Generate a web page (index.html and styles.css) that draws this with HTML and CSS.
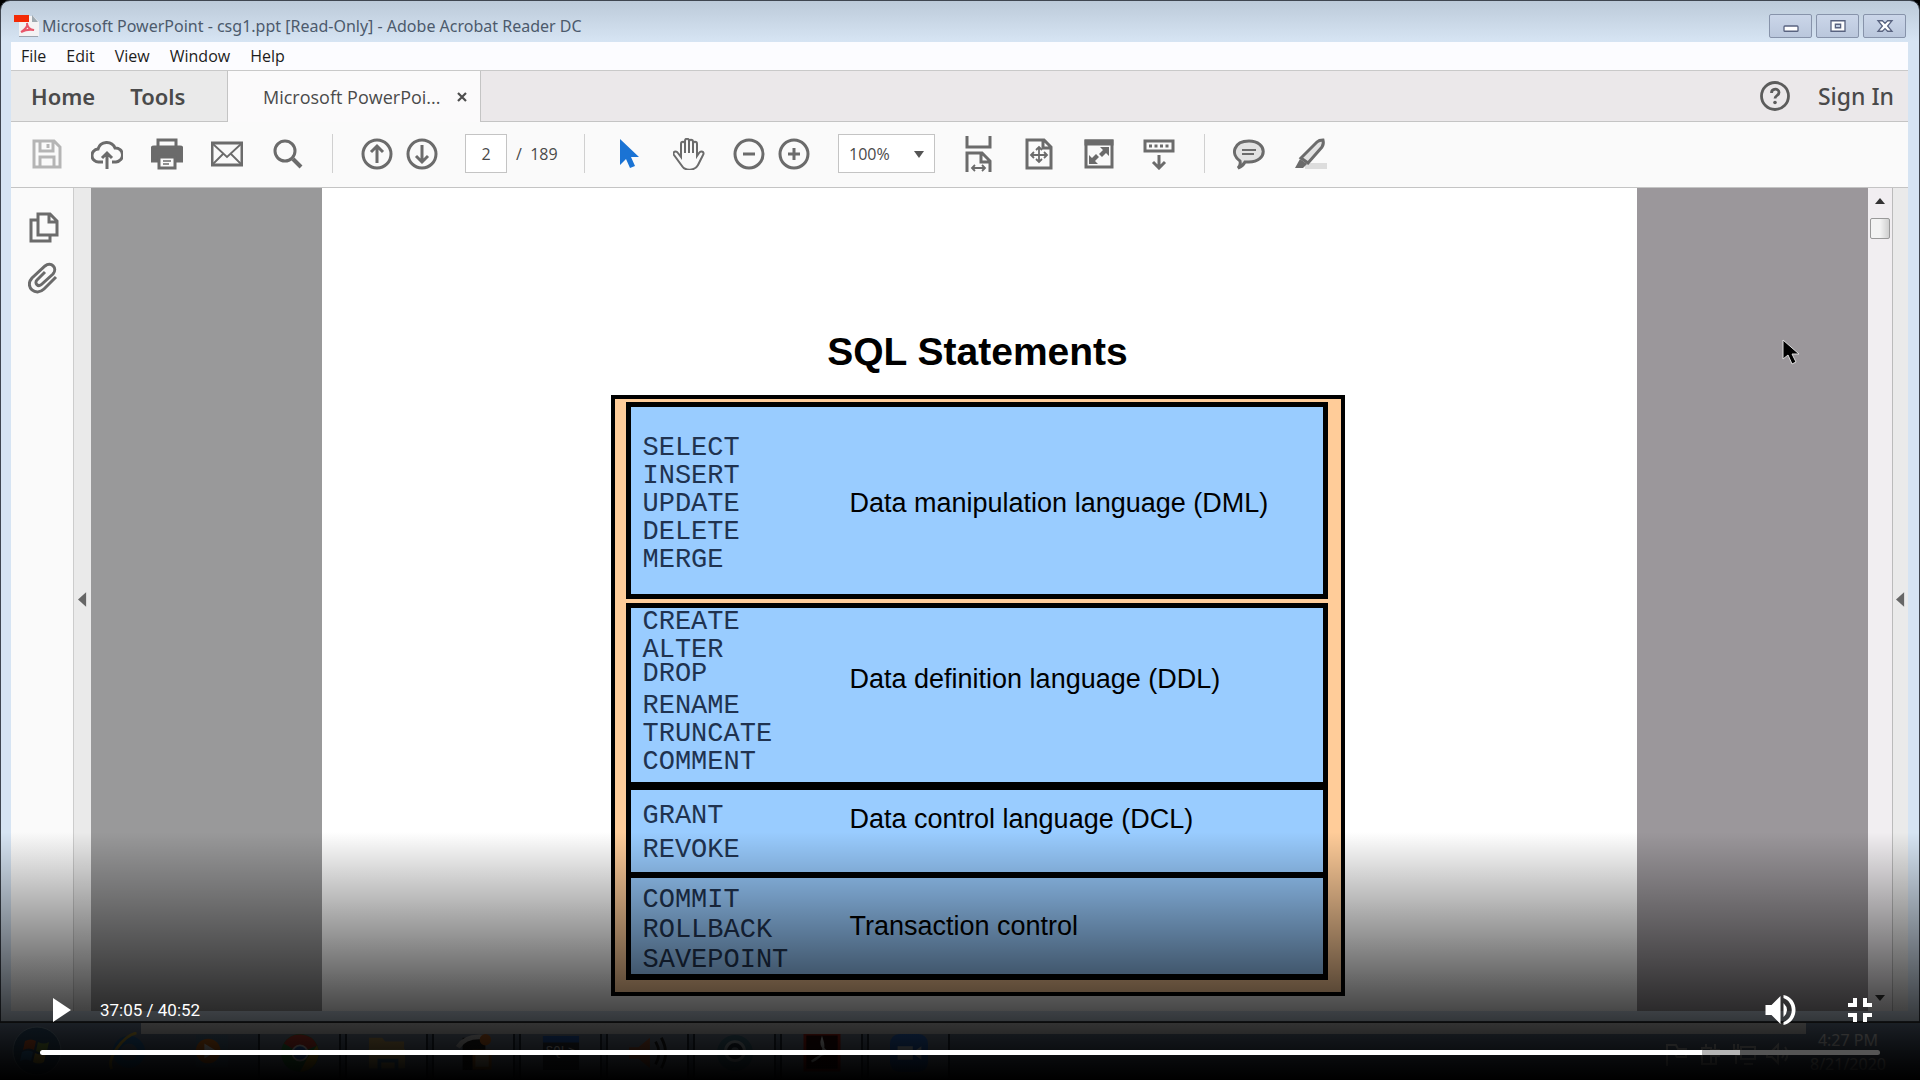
FILE: index.html
```html
<!DOCTYPE html>
<html lang="en">
<head>
<meta charset="utf-8">
<title>SQL Statements lecture</title>
<link rel="stylesheet" href="styles.css">
</head>
<body>
<main class="player">
  <div class="window">
    <header class="titlebar">
      <svg class="app-icon" viewBox="0 0 26 24"><path d="M5 2h14l6 6v14H5z" fill="#f4f2f3"/><path d="M18 1l6 7h-6z" fill="#9fa9b0"/><path d="M0 1h15v7H0z" fill="#f32a06"/><path d="M7 18c5-3 7-6 6-9m0 0c0 4 3 7 7 7-5-1-9 0-13 2" fill="none" stroke="#e8566a" stroke-width="2"/><path d="M5 22.500h19" stroke="#9da4ae"/></svg>
      <span class="window-title">Microsoft PowerPoint - csg1.ppt [Read-Only] - Adobe Acrobat Reader DC</span>
      <div class="window-buttons">
        <button type="button" aria-label="Minimize"><svg viewBox="0 0 20 16"><rect x="2" y="8" width="16" height="6" rx="1" fill="#fff" stroke="#596380" stroke-width="1.500"/></svg></button>
        <button type="button" aria-label="Maximize"><svg viewBox="0 0 20 16"><path d="M2 2h16v12H2zM7 6v4h6V6z" fill="#fff" fill-rule="evenodd" stroke="#596380" stroke-width="1.500"/></svg></button>
        <button type="button" aria-label="Close"><svg viewBox="0 0 20 16"><path d="M2 2h5l3 3 3-3h5l-5 6 5 6h-5l-3-3-3 3H2l5-6z" fill="#fff" stroke="#596380" stroke-width="1.500"/></svg></button>
      </div>
    </header>
    <div class="frame">
      <nav class="menubar">
        <button type="button">File</button><button type="button">Edit</button><button type="button">View</button><button type="button">Window</button><button type="button">Help</button>
      </nav>
      <div class="tabbar">
        <div class="home-tabs"><button type="button">Home</button><button type="button">Tools</button></div>
        <div class="doc-tab"><span>Microsoft PowerPoi...</span><button type="button" aria-label="Close tab"><svg viewBox="0 0 10 10"><path d="M1 1l8 8M9 1L1 9" stroke="#4d4d4d" stroke-width="2.200"/></svg></button></div>
        <div class="account">
          <button type="button" aria-label="Help"><svg class="help" viewBox="0 0 32 32"><circle cx="16" cy="16" r="13.500" fill="none" stroke="#5c5c5c" stroke-width="2.800"/><path d="M12.500 13c0-5 7.500-5 7.500-.5 0 3-4 3-4 6" fill="none" stroke="#5c5c5c" stroke-width="2.800"/><circle cx="16" cy="22.500" r="1.800" fill="#5c5c5c"/></svg></button>
          <button type="button">Sign In</button>
        </div>
      </div>
      <div class="toolbar">
        <div class="tools files">
          <button type="button" aria-label="Save"><svg class="pale" viewBox="0 0 32 32"><path d="M3 3h20l6 6v20H3zM9 3v10h13V3M17 6v4M9 29V19h14v10"/></svg></button>
          <button type="button" aria-label="Upload"><svg viewBox="0 0 32 32"><path d="M12 24H8a6.500 6.500 0 0 1-1-13 9 9 0 0 1 17-1 7 7 0 0 1 1 14h-4M16 31V15M11 20l5-5 5 5"/></svg></button>
          <button type="button" aria-label="Print"><svg viewBox="0 0 32 32"><path d="M7 10V2h18v8"/><path d="M1 11q0-2 2-2h26q2 0 2 2v12H1z" class="solid"/><path d="M8 19h16v11H8z" fill="#fafafa"/><path d="M12 23h8M12 26h6" stroke-width="1.500"/></svg></button>
          <button type="button" aria-label="Mail"><svg viewBox="0 0 32 32"><path d="M1 5h30v22H1z"/><path d="M2 6l14 13L30 6M2 26l10-10M30 26L20 16" stroke-width="1.800"/></svg></button>
          <button type="button" aria-label="Search"><svg viewBox="0 0 32 32"><circle cx="14" cy="13" r="10"/><path d="M22 21l8 8" stroke-width="4"/></svg></button>
        </div>
        <div class="tools paging">
          <button type="button" aria-label="Previous page"><svg viewBox="0 0 32 32"><circle cx="16" cy="16" r="14"/><path d="M16 25V9M10 14l6-6 6 6"/></svg></button>
          <button type="button" aria-label="Next page"><svg viewBox="0 0 32 32"><circle cx="16" cy="16" r="14"/><path d="M16 7v16M10 18l6 6 6-6"/></svg></button>
          <label class="page-box"><input type="text" value="2" aria-label="Page number"><span>/&nbsp; 189</span></label>
        </div>
        <div class="tools view">
          <button type="button" aria-label="Select"><svg viewBox="0 0 32 32"><path d="M7 1v26l6-6 4 9 5-2-4-9h8z" fill="#1a73d4" stroke="none"/></svg></button>
          <button type="button" aria-label="Pan"><svg viewBox="0 0 32 32"><path d="M8 19V6c0-3 4-3 4 0v9V3c0-3 4-3 4 0v12V4c0-3 4-3 4 0v11V6c0-3 4-3 4 0v12l2-3c2-3 6-1 4 2l-5 10c-3 6-13 6-16 1L1 17c-2-3 2-5 4-2z" stroke-width="2"/></svg></button>
          <button type="button" aria-label="Zoom out"><svg viewBox="0 0 32 32"><circle cx="16" cy="16" r="14"/><path d="M10 16h12"/></svg></button>
          <button type="button" class="in" aria-label="Zoom in"><svg viewBox="0 0 32 32"><circle cx="16" cy="16" r="14"/><path d="M10 16h12M16 10v12"/></svg></button>
          <span class="zoom-box"><select aria-label="Zoom level"><option>100%</option></select></span>
          <button type="button" aria-label="Fit width"><svg class="tall" viewBox="0 0 32 36"><path d="M4 0v11h23V0M4 36V17h15l8 8v11M18 17v9h9"/><path d="M9 32h13M12 29l-3 3 3 3M19 29l3 3-3 3" stroke-width="1.800"/></svg></button>
          <button type="button" aria-label="Fit page"><svg viewBox="0 0 32 32"><path d="M4 2h17l7 7v21H4zM20 2v8h8"/><path d="M16 9v15M8 17h16M13 12l3-3 3 3M13 21l3 3 3-3M11 14l-3 3 3 3M21 14l3 3-3 3" stroke-width="1.800"/></svg></button>
          <button type="button" aria-label="Full screen"><svg viewBox="0 0 32 32"><path d="M3 3h26v26H3z"/><path d="M3 3h26v3H3z" class="solid"/><path d="M17 9h9v9l-3-3-4 4-3-3 4-4zM15 26H6v-9l3 3 4-4 3 3-4 4z" class="fill"/></svg></button>
          <button type="button" aria-label="Toolbar position"><svg viewBox="0 0 32 32"><path d="M2 3h28v10H2zM16 17v13M10 24l6 6 6-6"/><path d="M6 8h20" stroke-dasharray="3 2.500"/></svg></button>
        </div>
        <div class="tools notes">
          <button type="button" aria-label="Comment"><svg viewBox="0 0 32 32"><path d="M7 23C-3 16 1 3 16 3c19 0 19 21 0 21h-4q-2 4-7 6 3-3 2-7z" fill="#e2e2e2"/><path d="M9 12h14M9 16h12" stroke-width="2"/></svg></button>
          <button type="button" aria-label="Highlight"><svg viewBox="0 0 32 32"><path d="M10 25h24v6H10z" fill="#ddd" stroke="none"/><path d="M6 20L22 4q2-2 6-2 1 4-1 7L13 25z" fill="#e2e2e2"/><path d="M5 21l7 5-4 4H0z" class="fill"/></svg></button>
        </div>
      </div>
      <div class="workspace">
        <aside class="sidebar">
          <button type="button" aria-label="Page thumbnails"><svg viewBox="0 0 32 32"><path d="M10 2h12l7 7v14H10zM21 2v8h8M9 8H3v21h19v-6"/></svg></button>
          <button type="button" aria-label="Attachments"><svg viewBox="0 0 32 32"><path d="M28 15L16 27C8 35-4 25 4 16L17 4c6-5 13 2 8 8L14 22c-4 4-8-1-5-4l8-8"/></svg></button>
        </aside>
        <button type="button" class="collapse" aria-label="Expand left pane"><svg viewBox="0 0 10 16"><path d="M9 0v16L0 8z"/></svg></button>
        <div class="document">
          <article class="paper">
            <h1>SQL Statements</h1>
            <div class="diagram">
              <section class="group dml">
                <ul><li>SELECT</li><li>INSERT</li><li>UPDATE</li><li>DELETE</li><li>MERGE</li></ul>
                <p>Data manipulation language (DML)</p>
              </section>
              <div class="stack">
                <section class="group ddl">
                  <ul><li>CREATE</li><li>ALTER</li><li class="raised">DROP</li><li>RENAME</li><li>TRUNCATE</li><li>COMMENT</li></ul>
                  <p>Data definition language (DDL)</p>
                </section>
                <section class="group dcl">
                  <ul><li>GRANT</li><li>REVOKE</li></ul>
                  <p>Data control language (DCL)</p>
                </section>
                <section class="group tcl">
                  <ul><li>COMMIT</li><li>ROLLBACK</li><li>SAVEPOINT</li></ul>
                  <p>Transaction control</p>
                </section>
              </div>
            </div>
          </article>
        </div>
        <div class="scrollbar"><svg viewBox="0 0 10 6"><path d="M0 6l5-6 5 6z"/></svg><span class="thumb"></span><svg class="down" viewBox="0 0 10 6"><path d="M0 0l5 6 5-6z"/></svg></div>
        <button type="button" class="collapse right" aria-label="Expand right pane"><svg viewBox="0 0 10 16"><path d="M9 0v16L0 8z"/></svg></button>
      </div>
    </div>
  </div>
  <footer class="taskbar">
    <div class="share-strip"></div>
    <div class="pinned">
      <svg class="start" viewBox="0 0 50 50"><circle cx="25" cy="25" r="24" fill="#35597a" stroke="#8ba4b8"/><path d="M13 15q6-3 11 0l-2 9q-5-3-11 0z" fill="#e0622c"/><path d="M26 16q6 3 11 0l-2 9q-5 3-11 0z" fill="#8fb447"/><path d="M10 26q6-3 11 0l-2 9q-5-3-11 0z" fill="#3f8fd0"/><path d="M23 27q6 3 11 0l-2 9q-5 3-11 0z" fill="#e8c445"/></svg>
      <svg viewBox="0 0 40 40"><circle cx="22" cy="21" r="13" fill="none" stroke="#2a74b4" stroke-width="8"/><path d="M12 22h22" stroke="#2a74b4" stroke-width="5"/><path d="M4 39C-2 28 16 4 30 1" fill="none" stroke="#d8b43c" stroke-width="3"/></svg>
      <svg viewBox="0 0 40 40"><path d="M4 3h34v34H4z" fill="#5c7f9c"/><circle cx="17" cy="20" r="13" fill="#ee7c1c"/><path d="M13 12l13 8-13 8z" fill="#fff"/></svg>
    </div>
    <div class="running">
      <span><svg viewBox="0 0 40 40"><circle cx="20" cy="20" r="20" fill="#3a9b4b"/><path d="M3 10A20 20 0 0 1 38 12L20 20z" fill="#dd4335"/><path d="M38 12a20 20 0 0 1-18 28l8-15z" fill="#e9b928"/><circle cx="20" cy="20" r="8" fill="#3b7de0" stroke="#fff" stroke-width="2"/></svg></span>
      <span><svg viewBox="0 0 40 40"><path d="M1 4h14l3 4h20v28H1z" fill="#d5b066"/><path d="M1 16h38v20H1z" fill="#edd083"/><path d="M12 38V28h18v10" fill="none" stroke="#4b8cb9" stroke-width="4"/></svg></span>
      <span><svg viewBox="0 0 40 40"><path d="M8 4h24v34H8z" fill="#202020"/><path d="M3 14Q12 0 35 4" stroke="#e6e6e6" stroke-width="5" fill="none"/><circle cx="32" cy="6" r="6" fill="#db7125"/><path d="M20 18h17v18H20z" fill="#f2dcb5" stroke="#de812d" stroke-width="3"/></svg></span>
      <span><svg viewBox="0 0 40 40"><path d="M1 2h38v36H1z" fill="#343b46"/><path d="M1 2h38v7H1z" fill="#2868cd"/><text x="4" y="22" class="sql">SQL&gt;</text></svg></span>
      <span><svg viewBox="0 0 40 40"><path d="M0 14h10L22 4v32L10 26H0z" fill="#c3683e"/><path d="M28 8q7 12 0 24M34 4q9 16 0 32" fill="none" stroke="#222" stroke-width="3"/></svg></span>
      <span><svg viewBox="0 0 40 40"><circle cx="20" cy="20" r="19" fill="#4a7d92"/><circle cx="20" cy="18" r="10" fill="#263441" stroke="#bdccd5" stroke-width="3"/><circle cx="20" cy="18" r="4" fill="#8294a3"/></svg></span>
      <span><svg viewBox="0 0 40 40"><path d="M2 0h36v38H2z" fill="#290404" stroke="#b22215" stroke-width="3"/><path d="M9 29q17-7 11-24c-3 9 5 15 12 15-10-1-17 4-23 9" fill="none" stroke="#fff" stroke-width="2"/></svg></span>
      <span><svg viewBox="0 0 40 40"><rect width="40" height="40" rx="10" fill="#2d74db"/><path d="M8 13h16v14H8zM26 18l7-5v14l-7-5z" fill="#dce9fb"/></svg></span>
    </div>
    <div class="tray">
      <svg viewBox="0 0 24 24"><path d="M3 24V2M3 3h9l2 4h8v8h-9l-2-3H3"/></svg>
      <svg viewBox="0 0 24 24"><path d="M4 6h9v16H4zM8 2v4M17 2v6M13 8h9M15 8v6h6V8M18 14v8h-5"/></svg>
      <svg viewBox="0 0 24 24"><path d="M2 2v7M6 2v7M1 8h6v5H4v9M9 5h14v12H9zM12 22h9"/></svg>
      <svg viewBox="0 0 24 24"><path d="M1 9h5l6-6v18l-6-6H1zM16 8q3 4 0 8M19 5q5 7 0 14"/></svg>
      <div class="clock"><span>4:27 PM</span><span>8/21/2020</span></div>
    </div>
  </footer>
  <svg class="pointer" viewBox="0 0 18 26"><path d="M1 1v19l5-4 4 9 4-2-4-8h7z" fill="#000" stroke="#ddd"/></svg>
  <div class="controls">
    <div class="control-row">
      <button type="button" aria-label="Play"><svg viewBox="0 0 24 24"><path d="M5 0v24l18-12z"/></svg></button>
      <span class="time">37:05 / 40:52</span>
      <button type="button" class="volume" aria-label="Mute"><svg viewBox="0 0 30 30"><path d="M0 10h6l9-9v28l-9-9H0zM18 8q7 7 0 14zM18 0c16 3 16 27 0 30v-3c11-4 11-20 0-24z"/></svg></button>
      <button type="button" aria-label="Exit full screen"><svg viewBox="0 0 24 24"><path d="M5 0h4v9H0V5h5zM15 0h4v5h5v4h-9zM0 15h9v9H5v-5H0zM15 15h9v4h-5v5h-4z"/></svg></button>
    </div>
    <input class="seek" type="range" min="0" max="2452" value="2225" aria-label="Seek">
  </div>
</main>
</body>
</html>
```
FILE: styles.css
```css
* { box-sizing: border-box; }
body { margin: 0; background: #000; font-family: "Noto Sans", "Open Sans", sans-serif; color: #4a4a4a; }
button { border: 0; padding: 0; background: none; font: inherit; color: inherit; display: flex; align-items: center; justify-content: center; }
svg { display: block; flex: none; }
h1, p, ul { margin: 0; padding: 0; }
ul { list-style: none; }

.player { position: relative; height: 100vh; min-height: 600px; display: flex; flex-direction: column; overflow: hidden; }

.window { flex: 1; min-height: 0; display: flex; flex-direction: column; padding: 0 11px 10px 10px; border: 1px solid #3f4650; border-radius: 10px 10px 0 0; background: linear-gradient(#bccad9, #d6e4f3 40px, #d6e4f3); }
.titlebar { display: flex; align-items: center; height: 41px; flex: none; padding: 8px 2px 0 3px; }
.app-icon { width: 26px; height: 24px; }
.window-title { flex: 1; margin-left: 2px; font-size: 16px; line-height: 24px; white-space: nowrap; color: #4c5a6c; }
.window-buttons { display: flex; gap: 4px; align-self: flex-start; margin-top: 5px; }
.window-buttons button { width: 43px; height: 24px; border: 1px solid #8793aa; border-radius: 2px; background: linear-gradient(#cbd6e9, #bac7dc); }
.window-buttons svg { width: 18px; height: 14px; }

.frame { flex: 1; min-height: 0; display: flex; flex-direction: column; background: #fafafa; }
.menubar { display: flex; gap: 20px; flex: none; height: 28px; padding-left: 10px; font-family: "Open Sans", sans-serif; font-size: 16px; color: #1c1c1c; background: #fcfcff; }
.tabbar { display: flex; flex: none; height: 52px; border-top: 1px solid #c9c9c9; background: #ebe8ea; }
.home-tabs, .account { display: flex; padding-bottom: 1px; font-size: 22px; font-weight: 600; border-bottom: 1px solid #c4c4c4; }
.home-tabs { width: 217px; gap: 35px; padding-left: 20px; border-right: 1px solid #c4c4c4; background: #eaeaea; }
.doc-tab { display: flex; align-items: center; justify-content: space-between; width: 252px; padding: 0 13px 0 35px; font-family: "Open Sans", sans-serif; font-size: 18px; background: #fbfafb; }
.doc-tab svg { width: 10px; height: 10px; }
.account { flex: 1; justify-content: flex-end; gap: 27px; padding-right: 14px; border-left: 1px solid #c4c4c4; font-size: 23px; font-weight: 500; }
.help { width: 32px; height: 32px; }

.toolbar { display: flex; flex: none; height: 66px; padding: 12px 0 14px; border-bottom: 1px solid #c4c4c4; font-family: "Open Sans", sans-serif; }
.tools { display: flex; align-items: center; border-right: 1px solid #d0d0d0; }
.tools svg, .sidebar svg { width: 32px; height: 32px; fill: none; stroke: #6b6b6b; stroke-width: 3; }
.tools svg.pale { stroke: #b5b5b5; }
.tools svg.tall { height: 36px; }
.tools .solid { fill: #6b6b6b; }
.tools .fill { fill: #6b6b6b; stroke: none; }
.files { width: 322px; gap: 28px; padding-left: 20px; }
.paging { width: 252px; gap: 13px; padding-left: 28px; }
.page-box { display: flex; align-items: center; gap: 9px; margin-left: 14px; font-size: 16px; }
.page-box input { width: 42px; height: 39px; border: 1px solid #c4c4c4; background: #fff; font: inherit; color: inherit; text-align: center; }
.view { width: 620px; gap: 28px; padding-left: 28px; }
.view .in { margin-left: -15px; }
.zoom-box { position: relative; }
.zoom-box::after { content: ""; position: absolute; right: 11px; top: 17px; border: 5px solid transparent; border-top: 7px solid #555; border-bottom: 0; pointer-events: none; }
.zoom-box select { display: block; width: 97px; height: 39px; padding: 0 10px; border: 1px solid #c4c4c4; border-radius: 0; appearance: none; font: inherit; font-size: 16px; color: inherit; background: #fff; }
.notes { gap: 30px; padding-left: 28px; border: 0; }

.workspace { flex: 1; min-height: 0; display: flex; }
.sidebar { width: 63px; flex: none; display: flex; flex-direction: column; align-items: center; gap: 18px; padding: 24px 0 0 4px; border-right: 1px solid #ccc; }
.collapse { width: 17px; flex: none; background: #eaeaea; }
.collapse svg { width: 9px; height: 15px; fill: #666; }
.document { flex: 1; min-width: 0; padding: 0 12.2%; overflow: hidden; background: linear-gradient(90deg, #99999a 50%, #9b979b 50%); }
.paper { height: 100%; padding: 142px 4px 0 0; display: flex; flex-direction: column; align-items: center; background: #fff; font-family: "Liberation Sans", sans-serif; color: #000; }
.paper h1 { font-size: 39px; line-height: 44px; }
.diagram { flex: none; width: 734px; max-width: 100%; margin-top: 21px; padding: 3px 13px 12px 11px; border: 4px solid #000; background: #ffcc99; }
.group { display: grid; grid-template-columns: 207px 1fr; padding-left: 12px; background: #99ccff; }
.group ul { display: flex; flex-direction: column; font: 27px/28px "Liberation Mono", monospace; color: #203350; }
.group p { font-size: 27px; line-height: 28px; white-space: nowrap; }
.raised { margin: -4px 0 4px; }
.dml { height: 197px; padding-top: 27px; border: 5px solid #000; }
.dml p { padding-top: 55px; }
.stack { margin-top: 4px; border: 5px solid #000; border-bottom-width: 6px; }
.ddl { height: 174px; }
.ddl p { padding-top: 57px; }
.dcl { height: 90px; padding-top: 12px; border-top: 8px solid #000; }
.dcl ul { gap: 6px; }
.dcl p { padding-top: 3px; }
.tcl { height: 102px; padding-top: 8px; border-top: 6px solid #000; }
.tcl ul { gap: 2px; }
.tcl p { padding-top: 26px; }
.scrollbar { width: 25px; flex: none; display: flex; flex-direction: column; align-items: center; gap: 14px; padding: 10px 0; border-right: 1px solid #bbb; background: #f1eef1; }
.scrollbar svg { width: 10px; height: 6px; fill: #333; }
.scrollbar .down { margin-top: auto; }
.thumb { width: 20px; height: 21px; border: 1px solid #999; border-radius: 2px; background: linear-gradient(90deg, #f3f3f3 50%, #cfcfcf); }
.right { width: 15px; }

.taskbar { position: relative; flex: none; height: 58px; display: flex; border-top: 1px solid #333; background: linear-gradient(#7286a0, #55657c); }
.share-strip { position: absolute; top: 0; left: 141px; right: 114px; height: 11px; background: #dcdcdc; }
.pinned { display: flex; align-items: center; gap: 46px; width: 258px; flex: none; padding: 0 0 2px 12px; }
.pinned svg, .running svg { width: 38px; height: 38px; }
.pinned .start { width: 50px; height: 50px; }
.running { display: flex; gap: 4px; padding-top: 11px; }
.running span { width: 83px; display: flex; justify-content: center; border: solid #24303e; border-width: 0 2px; background: #8292a8; }
.sql { font: 13px "Liberation Mono", monospace; fill: #fff; }
.tray { margin-left: auto; width: 256px; display: flex; gap: 10px; padding-top: 19px; }
.tray svg { width: 24px; height: 24px; fill: none; stroke: #ddd; stroke-width: 2; }
.clock { display: flex; flex-direction: column; align-items: center; margin: -14px 0 0 10px; font-size: 16px; line-height: 24px; color: #fff; }

.pointer { position: absolute; left: 92.8%; top: 339px; width: 18px; height: 26px; }

.controls { position: absolute; left: 0; right: 0; bottom: 0; height: 248px; display: flex; flex-direction: column; justify-content: flex-end; padding: 0 40px 25px; background: linear-gradient(transparent, #000); }
.control-row { display: flex; align-items: center; height: 30px; margin-bottom: 25px; padding: 0 8px; color: #fff; }
.control-row svg { width: 24px; height: 24px; fill: #fff; }
.control-row .volume svg { width: 31px; height: 30px; }
.time { margin-left: 28px; font: 17px "Roboto", sans-serif; }
.volume { margin: 0 52px 0 auto; }
.seek { appearance: none; width: 100%; height: 5px; margin: 0; border-radius: 3px; background: linear-gradient(90deg, #fff 90.3%, #b5b5b5 90.3%, #b5b5b5 92.4%, #555 92.4%); }
.seek::-webkit-slider-thumb { appearance: none; width: 0; height: 0; }
```
